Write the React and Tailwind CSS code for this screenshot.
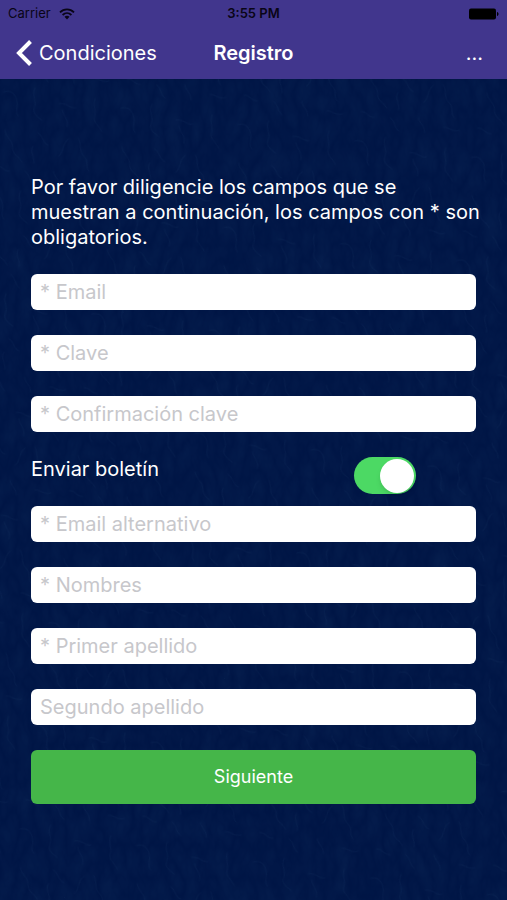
import { useState } from "react";

const firstFields = [
  { id: "email", label: "* Email", type: "email" },
  { id: "clave", label: "* Clave", type: "password" },
  { id: "confirmacion", label: "* Confirmación clave", type: "password" },
];

const secondFields = [
  { id: "email-alternativo", label: "* Email alternativo", type: "email" },
  { id: "nombres", label: "* Nombres", type: "text" },
  { id: "primer-apellido", label: "* Primer apellido", type: "text" },
  { id: "segundo-apellido", label: "Segundo apellido", type: "text" },
];

function WifiIcon() {
  return (
    <svg viewBox="0 0 16 12" className="h-3 w-4" fill="none" stroke="#090516" strokeWidth="1.8" aria-hidden="true">
      <path d="M1 4.4C5 .4 11 .4 15 4.4" />
      <path d="M3.6 7C6.2 4.5 9.8 4.5 12.4 7" />
      <path d="M5.5 8.8C7 7.4 9 7.4 10.5 8.8L8 11.4Z" fill="#090516" stroke="none" />
    </svg>
  );
}

function BatteryIcon() {
  return (
    <svg viewBox="0 0 30 12" className="h-3 w-[30px]" fill="#000" aria-hidden="true">
      <rect x="0" y="0.5" width="27" height="11" rx="2" />
      <path d="M28 4c1 .3 1.500 1 1.500 2s-.5 1.700-1.500 2z" />
    </svg>
  );
}

function Texture() {
  return (
    <svg className="pointer-events-none absolute inset-0 h-full w-full" aria-hidden="true">
      <defs>
        <filter id="grain" x="0" y="0" width="100%" height="100%" colorInterpolationFilters="sRGB">
          <feTurbulence type="turbulence" baseFrequency="0.06 0.03" numOctaves="3" seed="7" />
          <feColorMatrix values="0 0 0 0 0.1  0 0 0 0 0.24  0 0 0 0 0.42  0.6 0 0 0 0" />
        </filter>
        <pattern id="leather" width="118" height="104" patternUnits="userSpaceOnUse" patternTransform="rotate(8)">
          <g fill="none" stroke="#2d5580" strokeOpacity="0.09" strokeWidth="1" strokeLinecap="round">
            <path d="M6 12c7-3 12 1 14 8s-1 10 3 14" />
            <path d="M36 4c-3 8 4 12 2 19s5 9 9 12" />
            <path d="M62 16c8-2 11 4 17 2M66 22c2 7 8 8 7 16" />
            <path d="M97 6c-2 7 3 11 2 18s6 8 9 14" />
            <path d="M12 50c2 8 9 8 10 16s7 7 11 13" />
            <path d="M45 48c6 2 5 9 12 11M42 62c-3 7 4 11 3 17" />
            <path d="M76 50c-6 6-2 13-7 18M86 48c4 5 2 13 8 17s2 10 7 14" />
            <path d="M8 86c6-1 8 5 14 4M38 88c6 4 4 8 10 12" />
            <path d="M66 84c1 6 7 6 8 14M92 90c6-1 9 4 16 1" />
          </g>
        </pattern>
      </defs>
      <rect width="100%" height="100%" filter="url(#grain)" opacity="0.4" />
      <rect width="100%" height="100%" fill="url(#leather)" />
    </svg>
  );
}

function Field({ id, label, type }) {
  return (
    <input
      id={id}
      name={id}
      type={type}
      placeholder={label}
      aria-label={label}
      className="block h-9 w-full rounded-md bg-white px-[9px] text-xl text-gray-900 placeholder:text-[#c7c7cb]"
    />
  );
}

export default function App() {
  const [newsletter, setNewsletter] = useState(true);

  return (
    <div className="flex min-h-screen flex-col bg-[#001545] font-['Inter','Noto_Sans',sans-serif] text-white">
      <header className="bg-[#41368d]">
        <div className="grid h-7 grid-cols-[1fr_auto_1fr] items-center px-2 text-[13px] text-[#090516]">
          <div className="flex items-center gap-2">
            <span>Carrier</span>
            <WifiIcon />
          </div>
          <span className="font-semibold">3:55 PM</span>
          <div className="flex justify-end">
            <BatteryIcon />
          </div>
        </div>
        <nav className="grid h-[51px] grid-cols-[1fr_auto_1fr] items-center px-4 pb-0.5 text-xl">
          <button type="button" className="flex items-center gap-[7px] justify-self-start">
            <svg viewBox="0 0 16 26" className="h-[26px] w-4" fill="none" stroke="#fff" strokeWidth="4" aria-hidden="true">
              <path d="M14.500 1.500L3 13l11.500 11.500" />
            </svg>
            Condiciones
          </button>
          <h1 className="font-semibold">Registro</h1>
          <button type="button" aria-label="Más opciones" className="justify-self-end pr-2">...</button>
        </nav>
      </header>

      <main className="relative grow">
        <Texture />
        <form className="relative px-[31px] pt-24 pb-24" onSubmit={(e) => e.preventDefault()}>
          <p className="-mr-2 mb-6 text-xl leading-[25px]">
            Por favor diligencie los campos que se muestran a continuación, los campos con * son obligatorios.
          </p>
          <div className="flex flex-col gap-[25px]">
            {firstFields.map((f) => (
              <Field key={f.id} {...f} />
            ))}
          </div>
          <div className="mt-[25px] mb-3 flex items-start justify-between pr-[60px]">
            <label htmlFor="boletin" className="text-xl leading-[25px]">
              Enviar boletín
            </label>
            <input
              id="boletin"
              type="checkbox"
              role="switch"
              checked={newsletter}
              onChange={(e) => setNewsletter(e.target.checked)}
              className="flex h-[37px] w-[62px] appearance-none items-center rounded-full bg-gray-400 px-0.5 before:size-[34px] before:rounded-full before:bg-white before:shadow-md before:content-[''] checked:justify-end checked:bg-[#4cd964]"
            />
          </div>
          <div className="flex flex-col gap-[25px]">
            {secondFields.map((f) => (
              <Field key={f.id} {...f} />
            ))}
            <button type="submit" className="h-[54px] w-full rounded-md bg-[#45b649] text-lg">
              Siguiente
            </button>
          </div>
        </form>
      </main>
    </div>
  );
}
